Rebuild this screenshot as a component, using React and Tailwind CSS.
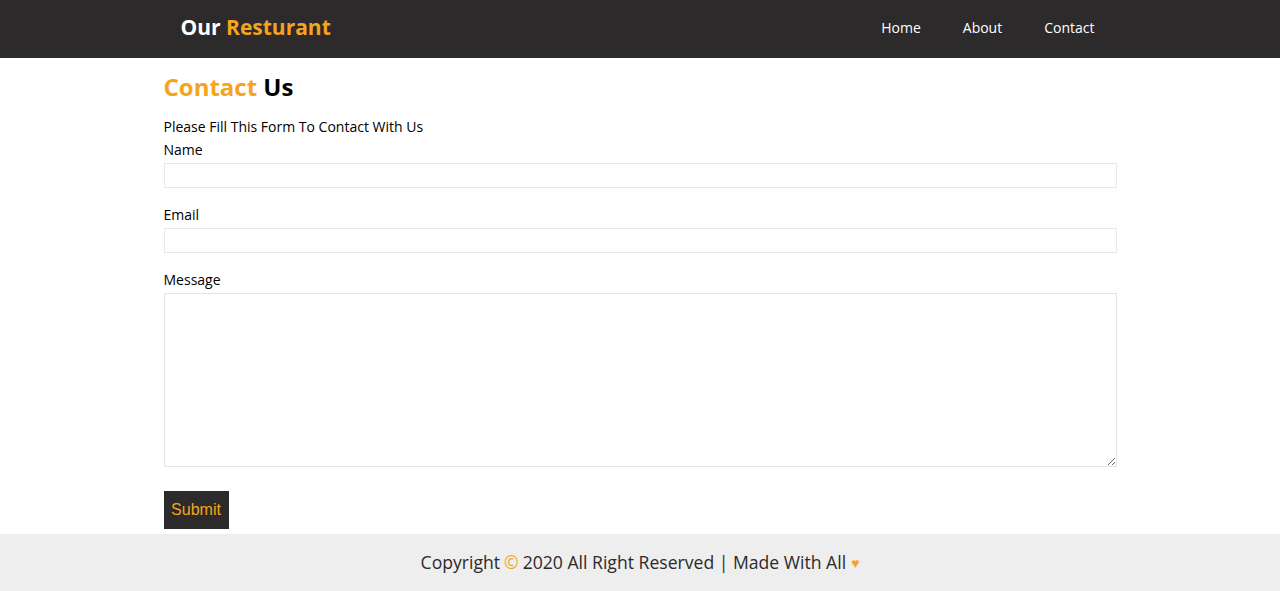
import React from "react";

export default function App() {
  return (
    <div className="min-h-[591px] flex flex-col bg-white font-['Open_Sans',sans-serif]">
      <header className="h-[58px] bg-[#2c2a2a]">
        <div className="w-[953px] mx-auto h-full flex items-center justify-between pl-[17px] pr-[22px] pb-[2px]">
          <h1 className="text-[21px] font-bold text-white">
            Our <span className="text-[#f5a41d]">Resturant</span>
          </h1>
          <nav className="flex gap-[42px] text-[14px] text-white mb-[2px]">
            <a href="#">Home</a>
            <a href="#">About</a>
            <a href="#">Contact</a>
          </nav>
        </div>
      </header>

      <main className="flex-1 w-[953px] mx-auto pt-[13px]">
        <h2 className="text-[24px] font-bold leading-[32px] text-black">
          <span className="text-[#f5a41d]">Contact</span> Us
        </h2>
        <p className="mt-[14px] text-[14px] leading-[20px] text-black">
          Please Fill This Form To Contact With Us
        </p>
        <form className="flex flex-col">
          <label className="mt-[3px] text-[14px] leading-[20px] text-black">Name</label>
          <input
            type="text"
            className="mt-[3px] h-[25px] border border-[#e8e8e8] outline-none"
          />
          <label className="mt-[17px] text-[14px] leading-[20px] text-black">Email</label>
          <input
            type="email"
            className="mt-[3px] h-[25px] border border-[#e8e8e8] outline-none"
          />
          <label className="mt-[17px] text-[14px] leading-[20px] text-black">Message</label>
          <textarea className="mt-[3px] h-[174px] border border-[#e4e4e4] outline-none" />
          <div>
            <button
              type="submit"
              className="mt-[24px] h-[38px] w-[65px] bg-[#2c2a2a] text-[16px] text-[#f5a41d] font-['Liberation_Sans',sans-serif]"
            >
              Submit
            </button>
          </div>
        </form>
      </main>

      <footer className="h-[57px] mt-[5px] bg-[#eeeeee] flex items-center justify-center text-[17.6px] text-[#2c2a2a]">
        <p className="flex items-center">
          Copyright <span className="text-[#f5a41d] mx-[4px]">©</span> 2020 All Right Reserved | Made With All
          <span className="text-[#f5a41d] text-[14px] ml-[5px]">♥</span>
        </p>
      </footer>
    </div>
  );
}
